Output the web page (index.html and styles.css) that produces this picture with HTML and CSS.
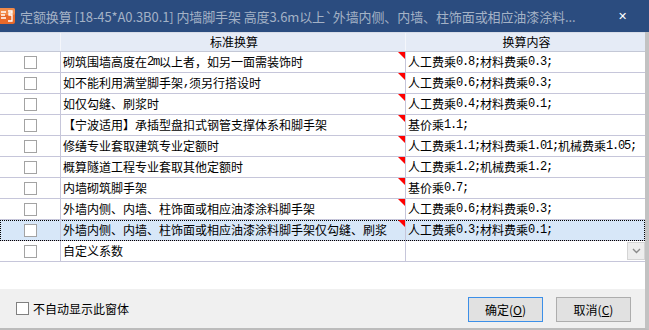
FILE: index.html
```html
<!DOCTYPE html>
<html lang="zh-CN">
<head>
<meta charset="utf-8">
<link rel="stylesheet" href="styles.css">
</head>
<body>
<div class="dialog">
  <div class="titlebar">
    <svg class="appicon" width="16" height="16" viewBox="0 0 16 16">
      <rect x="-2" y="0" width="17" height="16" rx="2" fill="#e8692a"/>
      <rect x="-2" y="0" width="17" height="7" rx="2" fill="#f08a4a"/>
      <path d="M1 4h5M1 7h4M1 10h5" stroke="#fff" stroke-width="1.4" fill="none"/>
      <path d="M8 3h4v2h-3v2h3v6h-4" stroke="#fff" stroke-width="1.3" fill="none"/>
    </svg>
    <span class="title">定额换算 [18-45*A0.3B0.1] 内墙脚手架 高度3.6m以上`外墙内侧、内墙、柱饰面或相应油漆涂料...</span>
    <span class="close">✕</span>
  </div>
  <div class="body">
    <div class="grid">
      <div class="row head">
        <div class="cell c1"></div>
        <div class="cell c2">标准换算</div>
        <div class="cell c3">换算内容</div>
      </div>
      <div class="row">
        <div class="cell c1"><span class="cb"></span></div>
        <div class="cell c2 mark">砌筑围墙高度在<span class="m">2m</span>以上者，如另一面需装饰时</div>
        <div class="cell c3">人工费乘<span class="m">0.8;</span>材料费乘<span class="m">0.3;</span></div>
      </div>
      <div class="row">
        <div class="cell c1"><span class="cb"></span></div>
        <div class="cell c2 mark">如不能利用满堂脚手架<span class="m">,</span>须另行搭设时</div>
        <div class="cell c3">人工费乘<span class="m">0.6;</span>材料费乘<span class="m">0.3;</span></div>
      </div>
      <div class="row">
        <div class="cell c1"><span class="cb"></span></div>
        <div class="cell c2 mark">如仅勾缝、刷浆时</div>
        <div class="cell c3">人工费乘<span class="m">0.4;</span>材料费乘<span class="m">0.1;</span></div>
      </div>
      <div class="row">
        <div class="cell c1"><span class="cb"></span></div>
        <div class="cell c2 mark">【宁波适用】承插型盘扣式钢管支撑体系和脚手架</div>
        <div class="cell c3">基价乘<span class="m">1.1;</span></div>
      </div>
      <div class="row">
        <div class="cell c1"><span class="cb"></span></div>
        <div class="cell c2 mark">修缮专业套取建筑专业定额时</div>
        <div class="cell c3">人工费乘<span class="m">1.1;</span>材料费乘<span class="m">1.01;</span>机械费乘<span class="m">1.05;</span></div>
      </div>
      <div class="row">
        <div class="cell c1"><span class="cb"></span></div>
        <div class="cell c2 mark">概算隧道工程专业套取其他定额时</div>
        <div class="cell c3">人工费乘<span class="m">1.2;</span>机械费乘<span class="m">1.2;</span></div>
      </div>
      <div class="row">
        <div class="cell c1"><span class="cb"></span></div>
        <div class="cell c2 mark">内墙砌筑脚手架</div>
        <div class="cell c3">基价乘<span class="m">0.7;</span></div>
      </div>
      <div class="row">
        <div class="cell c1"><span class="cb"></span></div>
        <div class="cell c2 mark">外墙内侧、内墙、柱饰面或相应油漆涂料脚手架</div>
        <div class="cell c3">人工费乘<span class="m">0.6;</span>材料费乘<span class="m">0.3;</span></div>
      </div>
      <div class="row selected">
        <div class="cell c1"><span class="cb"></span></div>
        <div class="cell c2 mark">外墙内侧、内墙、柱饰面或相应油漆涂料脚手架仅勾缝、刷浆</div>
        <div class="cell c3">人工费乘<span class="m">0.3;</span>材料费乘<span class="m">0.1;</span></div>
      </div>
      <div class="row">
        <div class="cell c1"><span class="cb"></span></div>
        <div class="cell c2">自定义系数</div>
        <div class="cell c3 combo"><span class="drop"><svg width="9" height="6" viewBox="0 0 9 6"><path d="M1 1l3.5 3.5L8 1" stroke="#8a8a8a" stroke-width="1.4" fill="none"/></svg></span></div>
      </div>
    </div>
    <div class="footer">
      <label class="noshow"><span class="cb dark"></span>不自动显示此窗体</label>
      <div class="buttons">
        <button class="btn default">确定(<u>O</u>)</button>
        <button class="btn">取消(<u>C</u>)</button>
      </div>
    </div>
  </div>
</div>
</body>
</html>
```
FILE: styles.css
```css
html, body {
  margin: 0;
  padding: 0;
  background: #ffffff;
}
body {
  width: 649px;
  height: 330px;
  overflow: hidden;
  font-family: "Noto Sans CJK SC", sans-serif;
  font-size: 12px;
  color: #000;
}
.dialog {
  display: flex;
  flex-direction: column;
  width: 649px;
  height: 330px;
}
.titlebar {
  height: 32px;
  flex: none;
  background: #2b4c7f;
  display: flex;
  align-items: center;
  position: relative;
}
.appicon {
  flex: none;
  margin-right: 4px;
}
.title {
  color: #a4b2c6;
  font-size: 13px;
  white-space: nowrap;
  overflow: hidden;
  width: 575px;
  letter-spacing: -0.1px;
}
.close {
  color: #ffffff;
  font-family: "DejaVu Sans", sans-serif;
  font-weight: bold;
  font-size: 11px;
  margin-left: 23px;
}
.body {
  flex: 1;
  display: flex;
  flex-direction: column;
  border-right: 4px solid #c2c2c2;
  border-bottom: 2px solid #bcbcbc;
}
.grid {
  flex: 1;
  background: #fff;
}
.row {
  display: grid;
  grid-template-columns: 61px 345px 239px;
  height: 20px;
  border-bottom: 1px solid #c6c6da;
}
.row.head {
  height: 18px;
  background: #e5ebf6;
  border-top: 1px solid #d8dde8;
  border-bottom: 1px solid #c4c8d6;
}
.row.head .cell {
  justify-content: center;
  border-right-color: #f4f6fb;
}
.cell {
  display: flex;
  align-items: center;
  border-right: 1px solid #c6c6da;
  white-space: nowrap;
  overflow: hidden;
  position: relative;
  line-height: 20px;
}
.cell.c3 {
  border-right: none;
}
.c2, .c3 {
  padding-left: 2px;
}
.c1 {
  justify-content: center;
}
.mark::after {
  content: "";
  position: absolute;
  top: 0;
  right: 0;
  border-top: 7px solid #ff0000;
  border-left: 7px solid transparent;
}
.m {
  font-family: "Liberation Mono", monospace;
  letter-spacing: -1.2px;
  font-size: 12px;
}
.cb {
  display: inline-block;
  width: 11px;
  height: 11px;
  border: 1px solid #a3a3a3;
  background: #fff;
  margin-left: 1px;
}
.row.selected {
  background: #d7e7f8;
  outline: 1px dotted #000;
  outline-offset: -1px;
}
.combo {
  justify-content: flex-end;
}
.drop {
  width: 16px;
  height: 16px;
  background: #ededed;
  border: 1px solid #d4d4d4;
  display: flex;
  align-items: center;
  justify-content: center;
  margin-right: 0;
}
.footer {
  height: 39px;
  flex: none;
  background: #f0f0f0;
  display: flex;
  align-items: center;
  justify-content: space-between;
  padding-left: 16px;
  padding-right: 14px;
}
.noshow {
  display: flex;
  align-items: center;
}
.cb.dark {
  border-color: #808080;
  margin: 0 4px 0 0;
}
.buttons {
  display: flex;
  gap: 13px;
  margin-top: 1px;
}
.btn {
  width: 75px;
  height: 25px;
  background: #e1e1e1;
  border: 1px solid #adadad;
  font-family: "Noto Sans CJK SC", sans-serif;
  font-size: 12px;
  padding: 0;
  color: #000;
}
.btn.default {
  border-color: #3c8fe8;
}
```
